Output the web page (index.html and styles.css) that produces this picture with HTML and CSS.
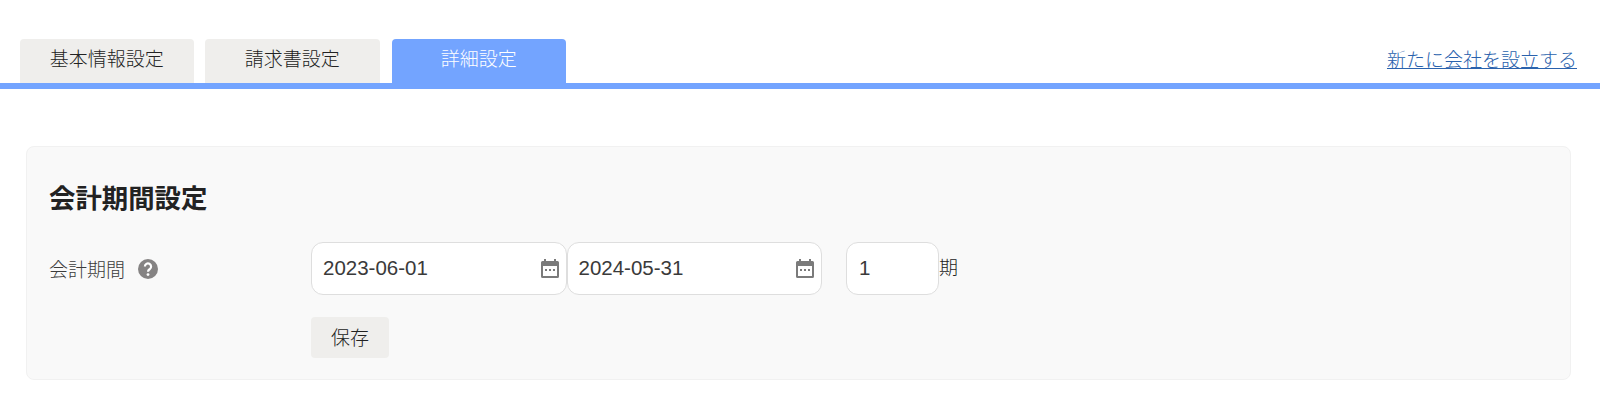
FILE: index.html
```html
<!DOCTYPE html>
<html lang="ja">
<head>
  <meta charset="UTF-8">
  <title>詳細設定</title>
  <link rel="stylesheet" href="styles.css">
</head>
<body>

  <div class="tabs">
    <div class="tab">基本情報設定</div>
    <div class="tab">請求書設定</div>
    <div class="tab active">詳細設定</div>
    <a class="new-company" href="#">新たに会社を設立する</a>
  </div>

  <div class="panel">
    <h2>会計期間設定</h2>

    <div class="row">
      <div class="label">
        会計期間
        <svg class="help" viewBox="0 0 20 20">
          <circle cx="10" cy="10" r="10" fill="#858383"/>
          <path d="M6.900 7.600a3.100 3.100 0 1 1 4.900 2.500c-1.100.8-1.800 1.200-1.800 2.600" fill="none" stroke="#fff" stroke-width="2.200"/>
          <circle cx="10" cy="15.600" r="1.400" fill="#fff"/>
        </svg>
      </div>
      <div class="date-field">
        <input type="text" value="2023-06-01">
        <svg class="calendar" viewBox="0 0 18 19">
          <path d="M3 0h2v2h8V0h2v2h1.500A1.500 1.500 0 0 1 18 3.500v14a1.500 1.500 0 0 1-1.500 1.500h-15A1.500 1.500 0 0 1 0 17.500v-14A1.500 1.500 0 0 1 1.500 2H3zM2 7v10h14V7z" fill="#7b7b7b" fill-rule="evenodd"/>
          <path d="M4 10h2v2H4zM8 10h2v2H8zM12 10h2v2h-2z" fill="#7b7b7b"/>
        </svg>
      </div>
      <div class="date-field">
        <input type="text" value="2024-05-31">
        <svg class="calendar" viewBox="0 0 18 19">
          <path d="M3 0h2v2h8V0h2v2h1.500A1.500 1.500 0 0 1 18 3.500v14a1.500 1.500 0 0 1-1.500 1.500h-15A1.500 1.500 0 0 1 0 17.500v-14A1.500 1.500 0 0 1 1.500 2H3zM2 7v10h14V7z" fill="#7b7b7b" fill-rule="evenodd"/>
          <path d="M4 10h2v2H4zM8 10h2v2H8zM12 10h2v2h-2z" fill="#7b7b7b"/>
        </svg>
      </div>
      <input class="term" type="text" value="1">
      <span class="unit">期</span>
    </div>

    <div class="actions">
      <button class="save">保存</button>
    </div>
  </div>

</body>
</html>
```

FILE: styles.css
```css
* {
  margin: 0;
  padding: 0;
  box-sizing: border-box;
  font-family: "Liberation Sans", "Noto Sans CJK JP", sans-serif;
}

body {
  background-color: #fff;
  color: #222;
  font-size: 19px;
  font-weight: 300;
}

.tabs {
  display: flex;
  align-items: flex-end;
  gap: 11px;
  height: 89px;
  padding: 39px 23px 0 19.500px;
  border-bottom: 6px solid #73a4ff;
}

.tab {
  width: 174.500px;
  height: 44px;
  line-height: 41px;
  text-align: center;
  background-color: #efeeec;
  border-radius: 4px 4px 0 0;
}

.tab.active {
  margin-left: 1px;
  background-color: #73a4ff;
  color: #fff;
}

.new-company {
  margin-left: auto;
  align-self: center;
  margin-bottom: 6px;
  color: #2a62ad;
}

.panel {
  height: 234px;
  margin: 57px 29px 0 26px;
  padding: 37px 22px 0;
  background-color: #f9f9f9;
  border: 1px solid #f1f1f1;
  border-radius: 8px;
}

.panel h2 {
  font-size: 26.400px;
  line-height: 30px;
  font-weight: 700;
  color: #222;
}

.row {
  display: flex;
  align-items: center;
  margin-top: 28px;
}

.label {
  display: flex;
  align-items: center;
  gap: 13px;
  width: 262px;
  color: #3c3c3c;
}

.help {
  width: 20px;
  height: 20px;
}

.date-field {
  position: relative;
  display: flex;
  width: 255.500px;
}

.row input {
  height: 53px;
  padding-bottom: 2px;
  font-size: 20.500px;
  font-weight: 400;
  color: #3a3a3a;
  background-color: #fff;
  border: 1px solid #dedede;
  border-radius: 12px;
  outline: none;
}

.date-field input {
  width: 100%;
  padding-left: 11px;
  padding-right: 11px;
}

.calendar {
  position: absolute;
  top: 17px;
  right: 8px;
  width: 18px;
  height: 19px;
}

.row input.term {
  width: 93px;
  margin-left: 24px;
  padding-left: 12px;
  padding-right: 12px;
}

.unit {
  margin-bottom: 4px;
}

.actions {
  margin: 22px 0 0 262px;
}

.save {
  width: 78px;
  height: 41px;
  padding-bottom: 2px;
  font-size: 19px;
  font-weight: 300;
  color: #222;
  background-color: #efeeec;
  border: none;
  border-radius: 4px;
}
```
